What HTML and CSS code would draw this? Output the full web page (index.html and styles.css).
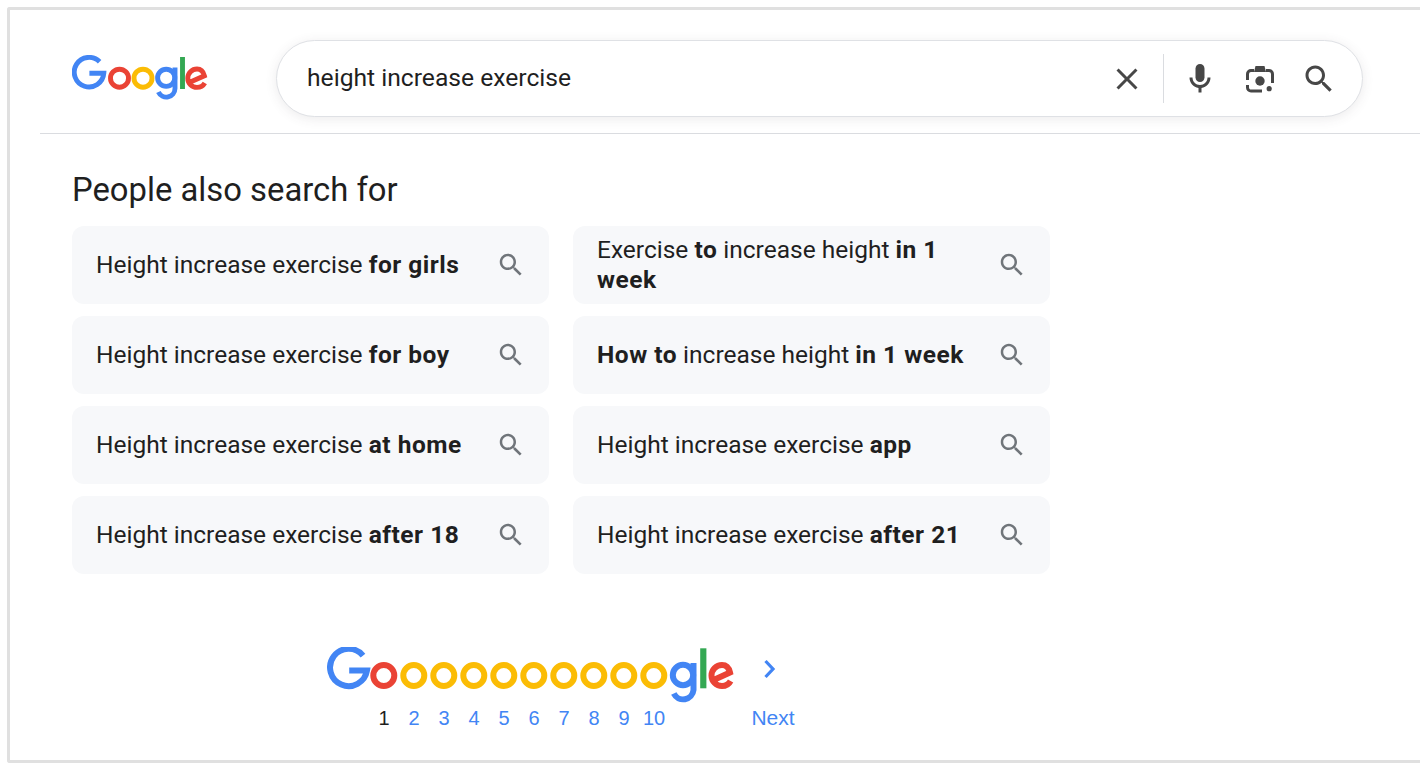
FILE: index.html
```html
<!DOCTYPE html>
<html>
<head>
    <title>height increase exercise - Google Search</title>
    <link rel="stylesheet" href="styles.css">
</head>
<body>

<div class="frame">

    <div class="header">
        <svg class="logo" viewBox="0 0 136 45" role="img" aria-label="Google">
            <g fill="none" stroke-width="4.9">
                <path stroke="#4285f4" d="M27.6 6.8A14.8 14.8 0 1 0 31.8 18.3H17.4"/>
                <circle stroke="#ea4335" cx="47.5" cy="23.2" r="9"/>
                <circle stroke="#fbbc05" cx="71" cy="23.2" r="9"/>
                <circle stroke="#4285f4" cx="94.2" cy="22.8" r="8.6"/>
                <path stroke="#4285f4" d="M103 12.5V33.5A8.7 8.7 0 0 1 86.4 37"/>
                <path stroke="#34a853" d="M110.5 2V34"/>
                <path stroke="#ea4335" d="M117.8 27.2L132.4 20.8C131.2 16 128.4 14 125 14A9.2 9.2 0 0 0 125 32.4C129 32.4 131.4 30.4 132.8 28"/>
            </g>
        </svg>

        <div class="search-box">
            <div class="search-text">height increase exercise</div>
            <svg class="box-icon icon-clear" viewBox="0 0 24 24"><path d="M19 6.41L17.59 5 12 10.59 6.41 5 5 6.41 10.59 12 5 17.59 6.41 19 12 13.41 17.59 19 19 17.59 13.41 12z"/></svg>
            <div class="box-divider"></div>
            <svg class="box-icon icon-mic" viewBox="0 0 24 24"><path d="M12 14c1.66 0 3-1.34 3-3V5c0-1.66-1.34-3-3-3S9 3.34 9 5v6c0 1.66 1.34 3 3 3z"/><path d="M17 11c0 2.76-2.24 5-5 5s-5-2.24-5-5H5c0 3.53 2.61 6.43 6 6.92V21h2v-3.08c3.39-.49 6-3.39 6-6.92h-2z"/></svg>
            <svg class="box-icon icon-lens" viewBox="0 0 36 36">
                <path class="lens-line" d="M5.5 19V13A3.5 3.5 0 0 1 9 9.5H12M24 9.5H27A3.5 3.5 0 0 1 30.5 13V22M5.5 24V26.5A3.5 3.5 0 0 0 9 30H20"/>
                <path d="M12 11L13.5 5H22.5L24 11z"/>
                <circle cx="18" cy="20" r="4.7"/>
                <circle cx="27.2" cy="27.7" r="2.6"/>
            </svg>
            <svg class="box-icon icon-search" viewBox="0 0 24 24"><path d="M15.5 14h-.79l-.28-.27C15.41 12.59 16 11.11 16 9.5 16 5.91 13.09 3 9.5 3S3 5.91 3 9.5 5.91 16 9.5 16c1.61 0 3.09-.59 4.23-1.57l.27.28v.79l5 4.99L20.49 19l-4.99-5zm-6 0C7.01 14 5 11.99 5 9.5S7.01 5 9.5 5 14 7.01 14 9.5 11.99 14 9.5 14z"/></svg>
        </div>
    </div>

    <div class="content">
        <h2 class="section-title">People also search for</h2>

        <div class="chips">
            <a class="chip" href="#"><span class="chip-text">Height increase exercise <b>for girls</b></span><svg class="chip-icon" viewBox="0 0 24 24"><path d="M15.5 14h-.79l-.28-.27C15.41 12.59 16 11.11 16 9.5 16 5.91 13.09 3 9.5 3S3 5.91 3 9.5 5.91 16 9.5 16c1.61 0 3.09-.59 4.23-1.57l.27.28v.79l5 4.99L20.49 19l-4.99-5zm-6 0C7.01 14 5 11.99 5 9.5S7.01 5 9.5 5 14 7.01 14 9.5 11.99 14 9.5 14z"/></svg></a>
            <a class="chip" href="#"><span class="chip-text">Exercise <b>to</b> increase height <b>in 1</b> <b>week</b></span><svg class="chip-icon" viewBox="0 0 24 24"><path d="M15.5 14h-.79l-.28-.27C15.41 12.59 16 11.11 16 9.5 16 5.91 13.09 3 9.5 3S3 5.91 3 9.5 5.91 16 9.5 16c1.61 0 3.09-.59 4.23-1.57l.27.28v.79l5 4.99L20.49 19l-4.99-5zm-6 0C7.01 14 5 11.99 5 9.5S7.01 5 9.5 5 14 7.01 14 9.5 11.99 14 9.5 14z"/></svg></a>
            <a class="chip" href="#"><span class="chip-text">Height increase exercise <b>for boy</b></span><svg class="chip-icon" viewBox="0 0 24 24"><path d="M15.5 14h-.79l-.28-.27C15.41 12.59 16 11.11 16 9.5 16 5.91 13.09 3 9.5 3S3 5.91 3 9.5 5.91 16 9.5 16c1.61 0 3.09-.59 4.23-1.57l.27.28v.79l5 4.99L20.49 19l-4.99-5zm-6 0C7.01 14 5 11.99 5 9.5S7.01 5 9.5 5 14 7.01 14 9.5 11.99 14 9.5 14z"/></svg></a>
            <a class="chip" href="#"><span class="chip-text"><b>How to</b> increase height <b>in 1 week</b></span><svg class="chip-icon" viewBox="0 0 24 24"><path d="M15.5 14h-.79l-.28-.27C15.41 12.59 16 11.11 16 9.5 16 5.91 13.09 3 9.5 3S3 5.91 3 9.5 5.91 16 9.5 16c1.61 0 3.09-.59 4.23-1.57l.27.28v.79l5 4.99L20.49 19l-4.99-5zm-6 0C7.01 14 5 11.99 5 9.5S7.01 5 9.5 5 14 7.01 14 9.5 11.99 14 9.5 14z"/></svg></a>
            <a class="chip" href="#"><span class="chip-text">Height increase exercise <b>at home</b></span><svg class="chip-icon" viewBox="0 0 24 24"><path d="M15.5 14h-.79l-.28-.27C15.41 12.59 16 11.11 16 9.5 16 5.91 13.09 3 9.5 3S3 5.91 3 9.5 5.91 16 9.5 16c1.61 0 3.09-.59 4.23-1.57l.27.28v.79l5 4.99L20.49 19l-4.99-5zm-6 0C7.01 14 5 11.99 5 9.5S7.01 5 9.5 5 14 7.01 14 9.5 11.99 14 9.5 14z"/></svg></a>
            <a class="chip" href="#"><span class="chip-text">Height increase exercise <b>app</b></span><svg class="chip-icon" viewBox="0 0 24 24"><path d="M15.5 14h-.79l-.28-.27C15.41 12.59 16 11.11 16 9.5 16 5.91 13.09 3 9.5 3S3 5.91 3 9.5 5.91 16 9.5 16c1.61 0 3.09-.59 4.23-1.57l.27.28v.79l5 4.99L20.49 19l-4.99-5zm-6 0C7.01 14 5 11.99 5 9.5S7.01 5 9.5 5 14 7.01 14 9.5 11.99 14 9.5 14z"/></svg></a>
            <a class="chip" href="#"><span class="chip-text">Height increase exercise <b>after 18</b></span><svg class="chip-icon" viewBox="0 0 24 24"><path d="M15.5 14h-.79l-.28-.27C15.41 12.59 16 11.11 16 9.5 16 5.91 13.09 3 9.5 3S3 5.91 3 9.5 5.91 16 9.5 16c1.61 0 3.09-.59 4.23-1.57l.27.28v.79l5 4.99L20.49 19l-4.99-5zm-6 0C7.01 14 5 11.99 5 9.5S7.01 5 9.5 5 14 7.01 14 9.5 11.99 14 9.5 14z"/></svg></a>
            <a class="chip" href="#"><span class="chip-text">Height increase exercise <b>after 21</b></span><svg class="chip-icon" viewBox="0 0 24 24"><path d="M15.5 14h-.79l-.28-.27C15.41 12.59 16 11.11 16 9.5 16 5.91 13.09 3 9.5 3S3 5.91 3 9.5 5.91 16 9.5 16c1.61 0 3.09-.59 4.23-1.57l.27.28v.79l5 4.99L20.49 19l-4.99-5zm-6 0C7.01 14 5 11.99 5 9.5S7.01 5 9.5 5 14 7.01 14 9.5 11.99 14 9.5 14z"/></svg></a>
        </div>

        <div class="pager">
            <svg class="pager-logo" viewBox="0 0 460 56" role="img" aria-label="Goooooooooogle">
                <g fill="none" stroke-width="6">
                    <path stroke="#4285f4" d="M36 8.6A18.6 18.6 0 1 0 40 23.6H22.2"/>
                    <circle stroke="#ea4335" cx="56.8" cy="28.5" r="10.5"/>
                    <circle stroke="#fbbc05" cx="86.8" cy="28.5" r="10.5"/>
                    <circle stroke="#fbbc05" cx="116.8" cy="28.5" r="10.5"/>
                    <circle stroke="#fbbc05" cx="146.8" cy="28.5" r="10.5"/>
                    <circle stroke="#fbbc05" cx="176.8" cy="28.5" r="10.5"/>
                    <circle stroke="#fbbc05" cx="206.8" cy="28.5" r="10.5"/>
                    <circle stroke="#fbbc05" cx="236.8" cy="28.5" r="10.5"/>
                    <circle stroke="#fbbc05" cx="266.8" cy="28.5" r="10.5"/>
                    <circle stroke="#fbbc05" cx="296.8" cy="28.5" r="10.5"/>
                    <circle stroke="#fbbc05" cx="326.8" cy="28.5" r="10.5"/>
                    <circle stroke="#4285f4" cx="356" cy="28" r="10.2"/>
                    <path stroke="#4285f4" d="M366.5 16V43A10.4 10.4 0 0 1 346.8 46.5"/>
                    <path stroke="#34a853" stroke-width="6.2" d="M376.3 1.3V41.3"/>
                    <path stroke="#ea4335" d="M385.5 33.5L403 25.5C401.6 19.5 398 18 395 18A10.5 10.5 0 0 0 395 39C399.5 39 402 37 403.6 34"/>
                </g>
            </svg>
            <svg class="pager-chevron" viewBox="0 0 13 20"><path d="M2.5 2L10 10L2.5 18"/></svg>

            <div class="pager-links">
                <span class="page current">1</span>
                <a class="page" href="#">2</a>
                <a class="page" href="#">3</a>
                <a class="page" href="#">4</a>
                <a class="page" href="#">5</a>
                <a class="page" href="#">6</a>
                <a class="page" href="#">7</a>
                <a class="page" href="#">8</a>
                <a class="page" href="#">9</a>
                <a class="page" href="#">10</a>
                <a class="page page-next" href="#">Next</a>
            </div>
        </div>
    </div>

</div>

</body>
</html>
```

FILE: styles.css
```css
html, body { margin: 0; padding: 0; height: 100%; overflow: hidden; background: #fff; }
body { padding: 7px 0 0 7px; box-sizing: border-box; font-family: Roboto, "Liberation Sans", sans-serif; color: #1f1f1f; }

.frame { height: 756px; box-sizing: border-box; border: 3px solid #e0e0e0; border-right: none; border-radius: 3px 0 0 3px; overflow: hidden; }

.header { display: flex; align-items: flex-start; margin-left: 30px; padding: 30px 0 0 32px; height: 124px; box-sizing: border-box; border-bottom: 1px solid #dadce0; }
.logo { width: 136px; height: 45px; margin: 15px 68px 0 0; flex: none; }

.search-box { display: flex; align-items: center; width: 1087px; height: 77px; box-sizing: border-box; padding-left: 30px; border: 1px solid #dfe1e5; border-radius: 39px; background: #fff; box-shadow: 0 2px 12px 0 rgba(64, 60, 67, 0.1); flex: none; }
.search-text { flex: 1; padding-bottom: 2px; font-size: 24.65px; color: #1f1f1f; }
.box-icon { width: 36px; height: 36px; flex: none; fill: #474747; }
.icon-clear { margin-right: 18px; }
.box-divider { width: 1px; height: 49px; background: #dadce0; margin-right: 18px; flex: none; }
.icon-mic { margin-right: 24px; }
.icon-lens { margin-right: 23px; }
.icon-search { margin-right: 25px; }
.lens-line { fill: none; stroke: #474747; stroke-width: 3; }

.content { padding: 0 0 0 62px; }
.section-title { margin: 37px 0 17px 0; font-size: 32.8px; line-height: 38px; font-weight: 400; color: #1f1f1f; }

.chips { display: grid; grid-template-columns: 477px 477px; gap: 12px 24px; }
.chip { display: flex; align-items: center; height: 78px; box-sizing: border-box; padding: 0 23px 0 24px; border-radius: 12px; background: #f7f8fa; color: #1f1f1f; text-decoration: none; font-size: 24.5px; line-height: 30px; }
.chip b { font-weight: 700; letter-spacing: 0.5px; }
.chip-text { flex: 1; padding-right: 24px; }
.chip-icon { width: 30px; height: 30px; flex: none; fill: #70757a; }

.pager { margin: 73px 0 0 255px; position: relative; width: 480px; }
.pager-logo { display: block; width: 460px; height: 56px; }
.pager-chevron { position: absolute; left: 436px; top: 12px; width: 13px; height: 20px; fill: none; stroke: #4285f4; stroke-width: 3.2; }

.pager-links { display: flex; margin: 3px 0 0 42px; font-family: "Liberation Sans", Arial, sans-serif; font-size: 20px; line-height: 24px; }
.page { width: 30px; text-align: center; color: #4285f4; text-decoration: none; }
.page.current { color: #1f1f1f; }
.page-next { width: 44px; margin-left: 82px; font-size: 21px; }
```
